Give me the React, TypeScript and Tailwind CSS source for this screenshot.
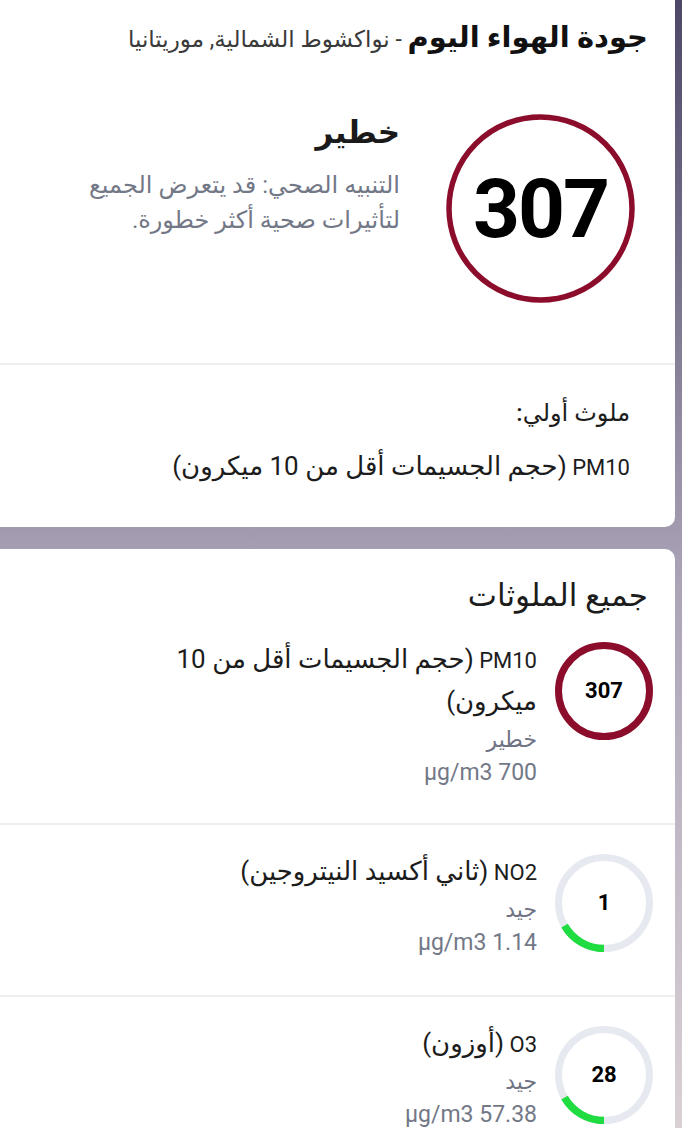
import React from "react";

const RED = "#8b0d2b";

function BigRing({ value }: { value: number }) {
  return (
    <div className="relative w-[189px] h-[189px] shrink-0 flex items-center justify-center">
      <svg className="absolute inset-0" width="189" height="189" viewBox="0 0 189 189">
        <circle cx="94.5" cy="94.5" r="91.5" fill="none" stroke={RED} strokeWidth="5.5" />
      </svg>
      <span className="relative text-[82px] leading-none font-bold text-black tracking-[-2px] font-['Roboto',sans-serif]">
        {value}
      </span>
    </div>
  );
}

function SmallRing({ value, good }: { value: number; good?: boolean }) {
  const r = 45.5;
  const c = 2 * Math.PI * r;
  const arc = c / 6;
  return (
    <div className="relative w-[98px] h-[98px] shrink-0 mt-[3px] flex items-center justify-center">
      <svg className="absolute inset-0" width="98" height="98" viewBox="0 0 98 98">
        {good ? (
          <>
            <circle cx="49" cy="49" r={r} fill="none" stroke="#e6eaf0" strokeWidth="7" />
            <circle
              cx="49"
              cy="49"
              r={r}
              fill="none"
              stroke="#1fdc40"
              strokeWidth="7.5"
              strokeDasharray={`${arc} ${c}`}
              transform="rotate(90 49 49)"
            />
          </>
        ) : (
          <circle cx="49" cy="49" r={r} fill="none" stroke={RED} strokeWidth="7" />
        )}
      </svg>
      <span className="relative text-[22px] leading-none font-bold text-black font-['Roboto',sans-serif]">
        {value}
      </span>
    </div>
  );
}

// Arabic glyphs come from DejaVu, which runs small next to Roboto
function Ar({ children }: { children: React.ReactNode }) {
  return <span className="text-[1.18em]">{children}</span>;
}

interface Pollutant {
  name: React.ReactNode;
  level: string;
  amount: string;
  aqi: number;
  good?: boolean;
}

const pollutants: Pollutant[] = [
  {
    name: (
      <>
        PM10 <Ar>(حجم الجسيمات أقل من 10</Ar>
        <br />
        <Ar>ميكرون)</Ar>
      </>
    ),
    level: "خطير",
    amount: "700 µg/m3",
    aqi: 307,
  },
  {
    name: (
      <>
        NO2 <Ar>(ثاني أكسيد النيتروجين)</Ar>
      </>
    ),
    level: "جيد",
    amount: "1.14 µg/m3",
    aqi: 1,
    good: true,
  },
  {
    name: (
      <>
        O3 <Ar>(أوزون)</Ar>
      </>
    ),
    level: "جيد",
    amount: "57.38 µg/m3",
    aqi: 28,
    good: true,
  },
];

export default function App() {
  return (
    <div
      dir="rtl"
      className="w-[682px] min-h-[1128px] overflow-hidden bg-gradient-to-b from-[#4e4767] via-[#aba4b7] to-[#ddd4d7] font-['Roboto','DejaVu_Sans',sans-serif] text-[#1c1c1c]"
    >
      {/* current AQI card */}
      <div className="mr-[7px] bg-white rounded-br-[10px]">
        <div className="pr-[27px] pt-[20px] leading-[34px] whitespace-nowrap">
          <span className="text-[29px] font-bold text-[#111]">جودة الهواء اليوم</span>
          <span className="text-[23px] text-[#3a3a3a]"> - نواكشوط الشمالية, موريتانيا</span>
        </div>

        <div className="flex items-start gap-[46px] pr-[40px] pt-[55px] pb-[60px]">
          <BigRing value={307} />
          <div className="-mt-[3px]">
            <div className="text-[31px] leading-[44px] font-bold text-[#1a1a1a]">خطير</div>
            <p className="mt-[13px] text-[24px] leading-[35px] text-[#737887]">
              التنبيه الصحي: قد يتعرض الجميع
              <br />
              لتأثيرات صحية أكثر خطورة.
            </p>
          </div>
        </div>

        <div className="border-t-2 border-[#efefef] pr-[45px] pt-[33px] pb-[44px]">
          <div className="text-[24px] leading-[30px] font-medium text-[#1c1c1c]">ملوث أولي:</div>
          <div className="mt-[23px] text-[22px] leading-[30px] text-[#1c1c1c]">
            PM10 <Ar>(حجم الجسيمات أقل من 10 ميكرون)</Ar>
          </div>
        </div>
      </div>

      {/* all pollutants card */}
      <div className="mr-[7px] mt-[22px] bg-white rounded-tr-[10px]">
        <h2 className="pr-[27px] pt-[30px] text-[31px] leading-[34px] font-medium text-[#1c1c1c]">
          جميع الملوثات
        </h2>
        {pollutants.map((p, i) => (
          <div
            key={i}
            className={`flex items-start gap-[18px] pr-[22px] pt-[26px] ${
              i === 0 ? "pb-[34px]" : "pb-[36px] border-t-2 border-[#efefef]"
            }`}
          >
            <SmallRing value={p.aqi} good={p.good} />
            <div>
              <div className="text-[22px] leading-[40px] text-[#1c1c1c]">{p.name}</div>
              <div className="text-[22px] leading-[34px] text-[#6f7384]">{p.level}</div>
              <div className="text-[23px] leading-[32px] text-[#737887]">{p.amount}</div>
            </div>
          </div>
        ))}
      </div>
    </div>
  );
}
